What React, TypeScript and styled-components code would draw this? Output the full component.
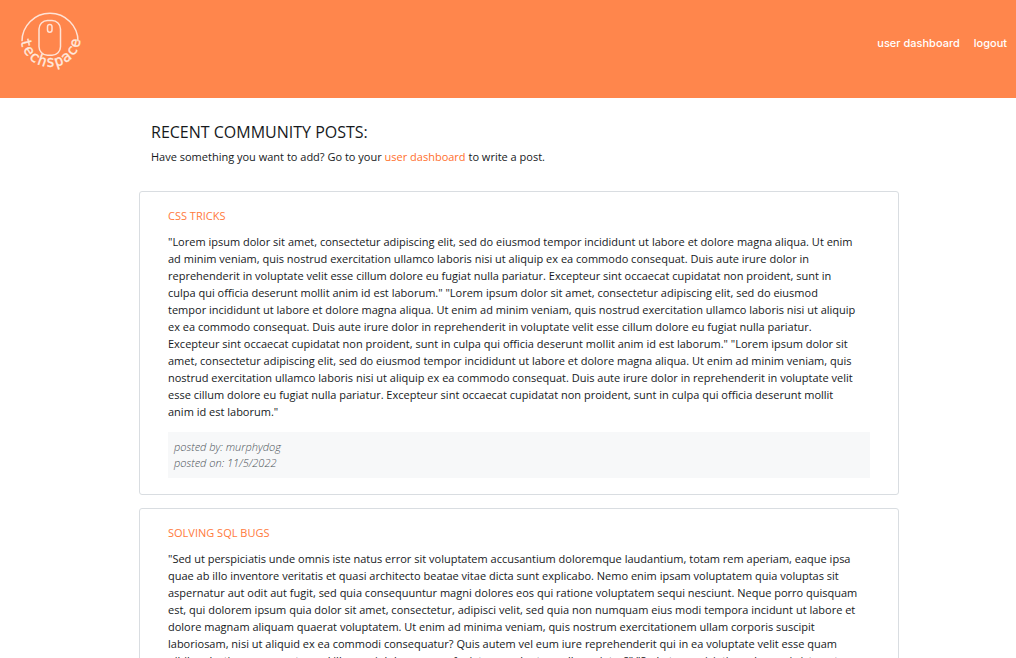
import React from "react";
import styled, { createGlobalStyle } from "styled-components";

const GlobalStyle = createGlobalStyle`
  * { box-sizing: border-box; }
  body {
    margin: 0;
    background: #ffffff;
    color: #16191c;
    font-family: "Open Sans", "Noto Sans", sans-serif;
    font-size: 11px;
    line-height: 17px;
  }
`;

const Header = styled.header`
  display: flex;
  justify-content: space-between;
  align-items: flex-start;
  height: 98px;
  padding: 8px 9px 0 14px;
  background: #ff864c;
`;

const LogoLink = styled.a`
  display: block;
  svg { display: block; }
`;

const Nav = styled.nav`
  display: flex;
  align-items: center;
  gap: 14px;
  padding-top: 27px;
`;

const NavLink = styled.a`
  color: #ffffff;
  font-family: Inter, "Open Sans", sans-serif;
  font-weight: 500;
  text-decoration: none;
`;

const Main = styled.main`
  margin: 0 calc(12.5% - 10px) 0 calc(12.5% + 12px);
`;

const Intro = styled.section`
  padding: 24px 12px 26px;
`;

const Heading = styled.h1`
  margin: 0 0 6px;
  font-size: 16px;
  line-height: 20px;
  font-weight: 400;
`;

const Lead = styled.p`
  margin: 0;
`;

const TextLink = styled.a`
  color: #ff6f2c;
  text-decoration: none;
`;

const Card = styled.article`
  margin-bottom: 13px;
  padding: 15px 28px 16px;
  border: 1px solid #d9dde1;
  border-radius: 3px;
`;

const CardTitle = styled.h2`
  margin: 0 0 9px;
  color: #ff7a3c;
  font-size: 11px;
  line-height: 17px;
  font-weight: 400;
`;

const CardText = styled.p`
  margin: 0 0 12px;
  padding-right: 12px;
`;

const Meta = styled.footer`
  padding: 7px 6px;
  background: #f7f8f9;
  color: #4a5157;
  font-style: italic;
  font-weight: 300;
  line-height: 16px;
`;

const lorem =
  '"Lorem ipsum dolor sit amet, consectetur adipiscing elit, sed do eiusmod tempor incididunt ut labore et dolore magna aliqua. Ut enim ad minim veniam, quis nostrud exercitation ullamco laboris nisi ut aliquip ex ea commodo consequat. Duis aute irure dolor in reprehenderit in voluptate velit esse cillum dolore eu fugiat nulla pariatur. Excepteur sint occaecat cupidatat non proident, sunt in culpa qui officia deserunt mollit anim id est laborum."';

const perspiciatis =
  '"Sed ut perspiciatis unde omnis iste natus error sit voluptatem accusantium doloremque laudantium, totam rem aperiam, eaque ipsa quae ab illo inventore veritatis et quasi architecto beatae vitae dicta sunt explicabo. Nemo enim ipsam voluptatem quia voluptas sit aspernatur aut odit aut fugit, sed quia consequuntur magni dolores eos qui ratione voluptatem sequi nesciunt. Neque porro quisquam est, qui dolorem ipsum quia dolor sit amet, consectetur, adipisci velit, sed quia non numquam eius modi tempora incidunt ut labore et dolore magnam aliquam quaerat voluptatem. Ut enim ad minima veniam, quis nostrum exercitationem ullam corporis suscipit laboriosam, nisi ut aliquid ex ea commodi consequatur? Quis autem vel eum iure reprehenderit qui in ea voluptate velit esse quam nihil molestiae consequatur, vel illum qui dolorem eum fugiat quo voluptas nulla pariatur?"';

const posts = [
  {
    title: "CSS TRICKS",
    text: [lorem, lorem, lorem].join(" "),
    author: "murphydog",
    date: "11/5/2022",
  },
  {
    title: "SOLVING SQL BUGS",
    text: [perspiciatis, perspiciatis].join(" "),
    author: "murphydog",
    date: "11/5/2022",
  },
];

function Logo() {
  return (
    <svg width="72" height="68" viewBox="14 8 72 68" fill="none" stroke="#ffe3d6" strokeWidth="1.5" aria-label="techspace">
      <path d="M22 41.3A28 28 0 0 1 78 41.3" />
      <rect x="39" y="20.5" width="21.5" height="34.8" rx="8.5" />
      <rect x="47.5" y="24.5" width="4.5" height="7.7" rx="2.2" />
      <path id="logo-curve" d="M20.5 37.2A30 30 0 0 0 80.5 37.2" stroke="none" />
      <text fill="#ffe9df" stroke="#ffe9df" strokeWidth="0.3" fontFamily="DejaVu Sans Mono, monospace" fontSize="15" textAnchor="middle">
        <textPath href="#logo-curve" startOffset="50%">
          <tspan dx="0 1 1 1 1 1 1 1 1">techspace</tspan>
        </textPath>
      </text>
    </svg>
  );
}

export default function App() {
  return (
    <>
      <GlobalStyle />
      <Header>
        <LogoLink href="#"><Logo /></LogoLink>
        <Nav>
          <NavLink href="#">user dashboard</NavLink>
          <NavLink href="#">logout</NavLink>
        </Nav>
      </Header>
      <Main>
        <Intro>
          <Heading>RECENT COMMUNITY POSTS:</Heading>
          <Lead>
            Have something you want to add? Go to your <TextLink href="#">user dashboard</TextLink> to write a post.
          </Lead>
        </Intro>
        {posts.map((post) => (
          <Card key={post.title}>
            <CardTitle>{post.title}</CardTitle>
            <CardText>{post.text}</CardText>
            <Meta>
              <div>posted by: {post.author}</div>
              <div>posted on: {post.date}</div>
            </Meta>
          </Card>
        ))}
      </Main>
    </>
  );
}
